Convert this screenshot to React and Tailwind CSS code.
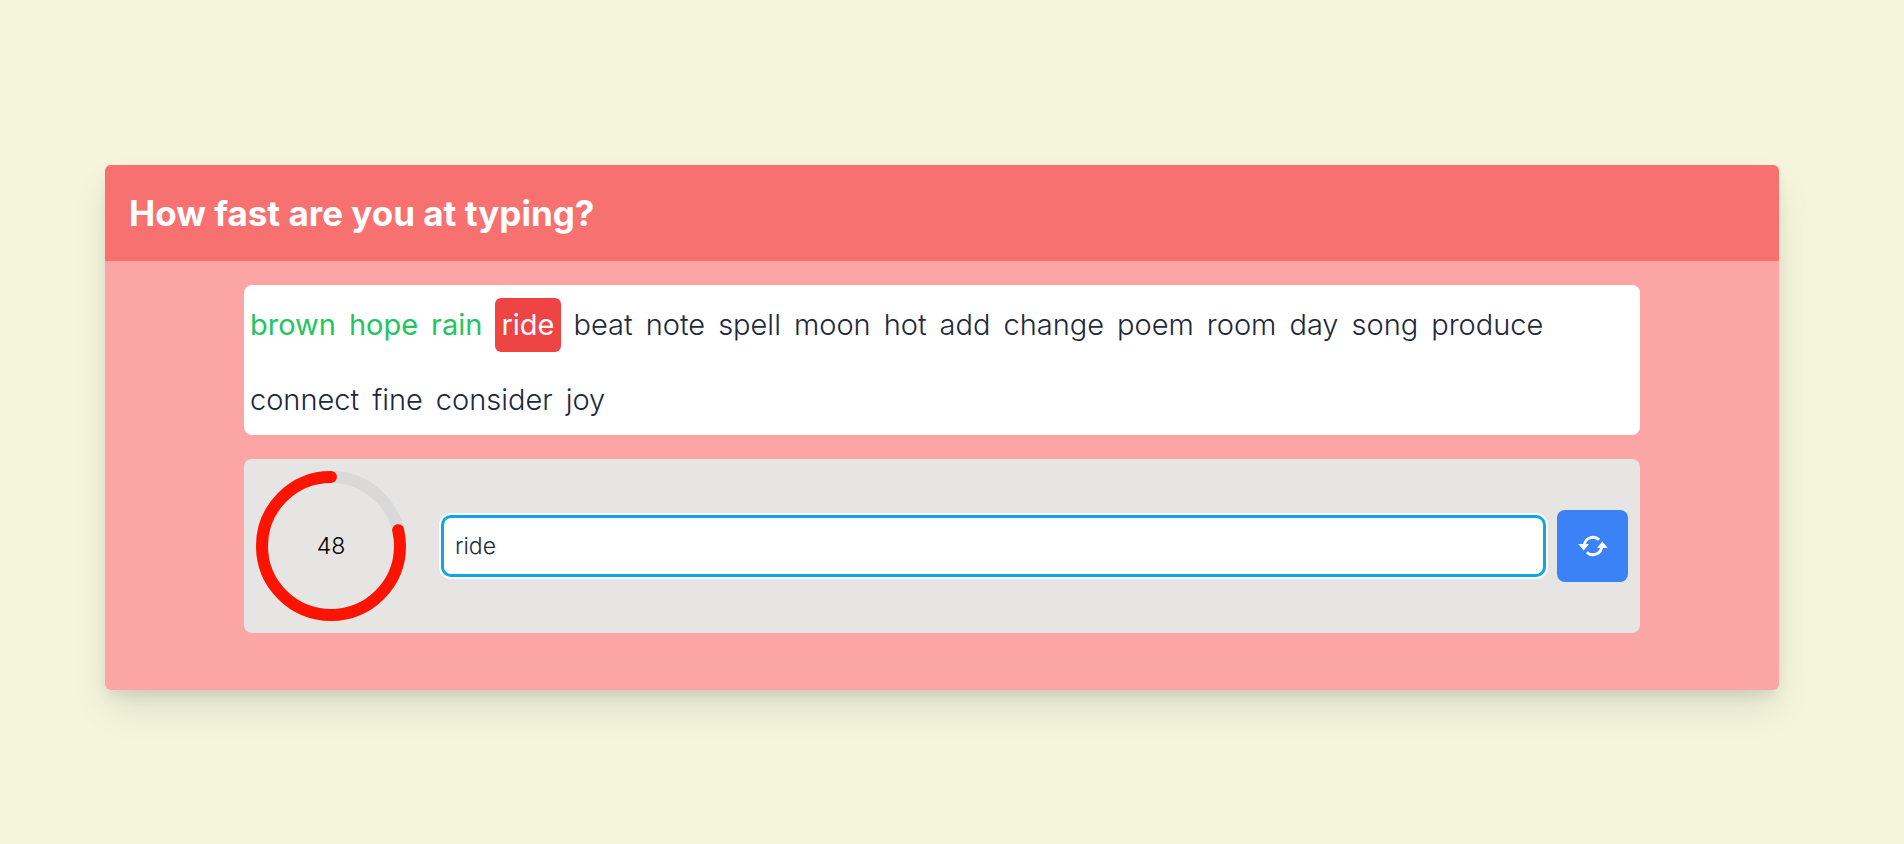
import { useState } from "react";

const words = [
  "brown", "hope", "rain", "ride", "beat", "note", "spell", "moon", "hot", "add",
  "change", "poem", "room", "day", "song", "produce", "connect", "fine", "consider", "joy",
];
const currentIndex = 3;

function wordClass(index) {
  if (index < currentIndex) return "text-[#22c55e]";
  if (index === currentIndex) return "rounded-md bg-[#ef4444] px-[6px] py-[6px] text-white";
  return "font-light text-[#1e293b]";
}

function SyncIcon() {
  return (
    <svg width="30" height="22" viewBox="0 0 30 22" fill="none" aria-hidden="true">
      <path d="M6.3 11A8.7 8.7 0 0 1 21.1 4.8M23.7 11A8.7 8.7 0 0 1 8.9 17.2" stroke="currentColor" strokeWidth="2.9" />
      <path d="M.3 9H11L5.7 15.4ZM29.7 13H19L24.3 6.6Z" fill="currentColor" />
    </svg>
  );
}

function Countdown({ seconds, remaining }) {
  return (
    <div className="grid size-[150px] shrink-0 place-items-center" role="timer">
      <svg viewBox="0 0 150 150" className="col-start-1 row-start-1 size-full" aria-hidden="true">
        <circle cx="75" cy="75" r="69" fill="none" stroke="#d9d9d9" strokeWidth="12" />
        <path
          d="M75 6a69 69 0 1 0 0 138a69 69 0 1 0 0-138"
          fill="none"
          stroke="#fc1400"
          strokeWidth="12"
          strokeLinecap="round"
          pathLength="1000"
          strokeDasharray={`${remaining * 1000} 1000`}
        />
      </svg>
      <span className="col-start-1 row-start-1 text-[23px] leading-9 font-light text-black">{seconds}</span>
    </div>
  );
}

export default function App() {
  const [value, setValue] = useState("ride");

  return (
    <main className="min-h-screen bg-[#f5f5dc] pt-[165px] pr-[125px] pb-[120px] pl-[105px] font-['Inter',sans-serif]">
      <section className="overflow-hidden rounded-md bg-[#fca5a5] shadow-[0_20px_38px_-4px_rgba(0,0,0,0.1),0_8px_15px_-4px_rgba(0,0,0,0.1)]">
        <header className="bg-[#f87171] p-6">
          <h1 className="text-[35px] leading-[48px] font-bold text-white">How fast are you at typing?</h1>
        </header>

        <div className="mx-auto flex w-[83.4%] flex-col gap-6 pt-6 pb-[57px]">
          <p className="flex flex-wrap gap-x-[13px] rounded-lg bg-white px-[6px] text-[29px] leading-[42px]">
            {words.map((word, index) => (
              <span key={word} className="flex h-[75px] items-center pt-1">
                <span className={wordClass(index)}>{word}</span>
              </span>
            ))}
          </p>

          <form
            className="flex items-center rounded-lg bg-[#e7e5e4] p-3"
            onSubmit={(event) => event.preventDefault()}
          >
            <Countdown seconds={48} remaining={0.787} />
            <input
              type="text"
              aria-label="Type the highlighted word"
              value={value}
              onChange={(event) => setValue(event.target.value)}
              className="mr-[11px] ml-[35px] h-[62px] min-w-0 flex-1 rounded-[10px] border-3 border-[#0ea5e9] bg-white px-[11px] text-[23px] leading-9 font-light text-[#1e293b] ring-2 ring-white outline-none"
            />
            <button
              type="button"
              aria-label="Restart"
              onClick={() => setValue("")}
              className="flex h-[72px] w-[71px] shrink-0 items-center justify-center rounded-lg bg-[#3b82f6] text-white"
            >
              <SyncIcon />
            </button>
          </form>
        </div>
      </section>
    </main>
  );
}
